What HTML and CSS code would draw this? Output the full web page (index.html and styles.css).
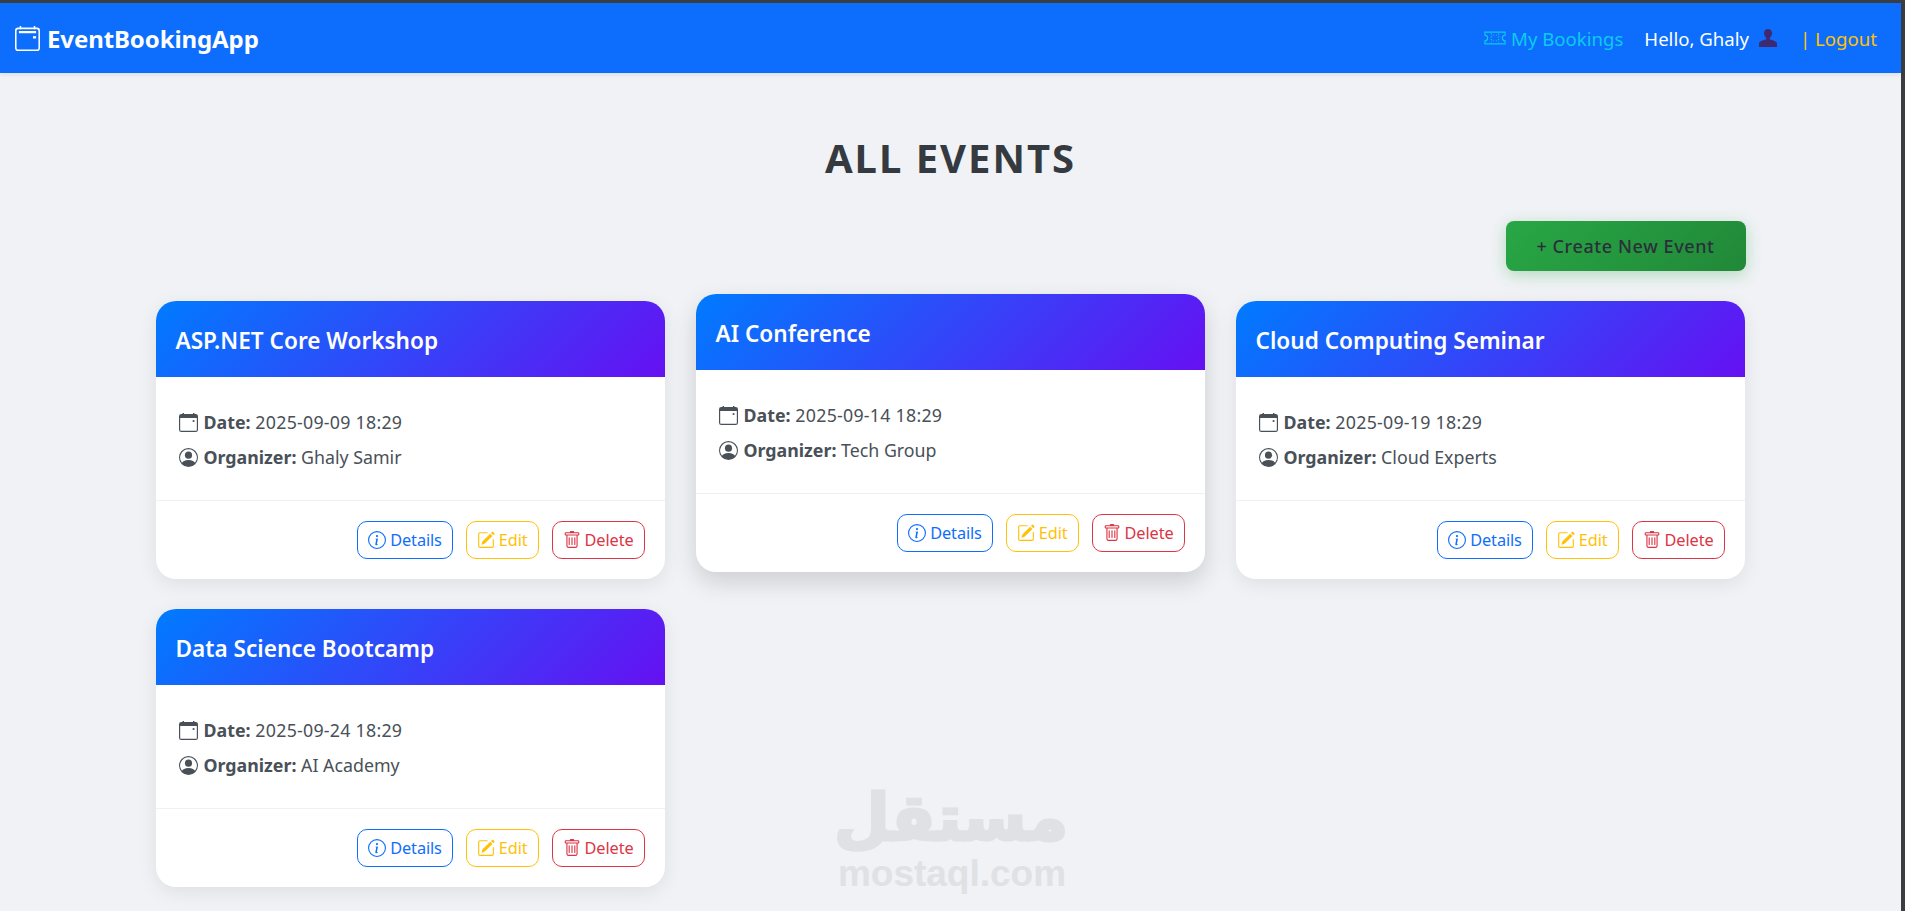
FILE: index.html
```html
<!DOCTYPE html>
<html lang="en">
  <head>
    <meta charset="UTF-8" />
    <meta name="viewport" content="width=device-width, initial-scale=1.0" />
    <title>EventBookingApp</title>
    <link rel="stylesheet" href="styles.css">
  </head>
  <body>
    <svg class="defs" aria-hidden="true">
      <symbol id="i-cal" viewBox="0 0 16 16">
        <path d="M2 .8h12A2 2 0 0 1 16 2.800v11.200a2 2 0 0 1-2 2H2a2 2 0 0 1-2-2V2.800a2 2 0 0 1 2-2zM1 4.200V14a1 1 0 0 0 1 1h12a1 1 0 0 0 1-1V4.200z"/>
        <path d="M3 0h1.200v2H3zM11.800 0H13v2h-1.200z"/>
        <rect x="11.500" y="6" width="1.500" height="1.500"/>
      </symbol>
      <symbol id="i-brand" viewBox="0 0 16 16">
        <path d="M2 1h12A2 2 0 0 1 16 3v11a2 2 0 0 1-2 2H2a2 2 0 0 1-2-2V3a2 2 0 0 1 2-2zM2 2a1 1 0 0 0-1 1v11a1 1 0 0 0 1 1h12a1 1 0 0 0 1-1V3a1 1 0 0 0-1-1z"/>
        <path d="M3 0h1v2H3zM12 0h1v2h-1zM2.500 3.200h11v1.500h-11z"/>
        <rect x="11.500" y="6.500" width="2" height="1.500"/>
      </symbol>
      <symbol id="i-user" viewBox="0 0 16 16">
        <path d="M11 6a3 3 0 1 1-6 0 3 3 0 0 1 6 0"/>
        <path fill-rule="evenodd" d="M0 8a8 8 0 1 1 16 0A8 8 0 0 1 0 8m8-7a7 7 0 0 0-5.468 11.370C3.242 11.226 4.805 10 8 10s4.757 1.225 5.468 2.370A7 7 0 0 0 8 1"/>
      </symbol>
      <symbol id="i-info" viewBox="0 0 16 16">
        <path d="M8 15A7 7 0 1 1 8 1a7 7 0 0 1 0 14m0 1A8 8 0 1 0 8 0a8 8 0 0 0 0 16"/>
        <path d="m8.930 6.588-2.290.287-.082.380.450.083c.294.070.352.176.288.469l-.738 3.468c-.194.897.105 1.319.808 1.319.545 0 1.178-.252 1.465-.598l.088-.416c-.2.176-.492.246-.686.246-.275 0-.375-.193-.304-.533zM9 4.500a1 1 0 1 1-2 0 1 1 0 0 1 2 0"/>
      </symbol>
      <symbol id="i-edit" viewBox="0 0 16 16">
        <path d="M15.502 1.940a.5.5 0 0 1 0 .706L14.459 3.690l-2-2L13.502.646a.5.5 0 0 1 .707 0l1.293 1.293zm-1.750 2.456-2-2L4.939 9.210a.5.5 0 0 0-.121.196l-.805 2.414a.25.25 0 0 0 .316.316l2.414-.805a.5.5 0 0 0 .196-.12l6.813-6.814z"/>
        <path fill-rule="evenodd" d="M1 13.500A1.500 1.500 0 0 0 2.500 15h11a1.500 1.500 0 0 0 1.500-1.500v-6a.5.5 0 0 0-1 0v6a.5.5 0 0 1-.5.5h-11a.5.5 0 0 1-.5-.5v-11a.5.5 0 0 1 .5-.5H9a.5.5 0 0 0 0-1H2.500A1.500 1.500 0 0 0 1 2.500z"/>
      </symbol>
      <symbol id="i-trash" viewBox="0 0 16 16">
        <path d="M5.500 5.500A.5.5 0 0 1 6 6v6a.5.5 0 0 1-1 0V6a.5.5 0 0 1 .5-.5m2.500 0a.5.5 0 0 1 .5.5v6a.5.5 0 0 1-1 0V6a.5.5 0 0 1 .5-.5m3 .5a.5.5 0 0 0-1 0v6a.5.5 0 0 0 1 0z"/>
        <path d="M14.500 3a1 1 0 0 1-1 1H13v9a2 2 0 0 1-2 2H5a2 2 0 0 1-2-2V4h-.5a1 1 0 0 1-1-1V2a1 1 0 0 1 1-1H6a1 1 0 0 1 1-1h2a1 1 0 0 1 1 1h3.500a1 1 0 0 1 1 1zM4.118 4 4 4.059V13a1 1 0 0 0 1 1h6a1 1 0 0 0 1-1V4.059L11.882 4zM2.500 3h11V2h-11z"/>
      </symbol>
    </svg>

    <div class="page">
      <nav class="navbar">
        <a class="brand" href="#"><svg class="brand-icon"><use href="#i-brand"/></svg>EventBookingApp</a>
        <div class="nav-links">
          <a class="nav-bookings" href="#">
            <svg class="ticket" viewBox="0 0 24 16" fill="none" stroke="currentColor" stroke-width="1.300">
              <path d="M1 1.500h22v3.500a3 3 0 0 0 0 6v3.500H1V11a3 3 0 0 0 0-6z"/>
              <path d="M8 3v10M16 3v10" stroke-dasharray="1.500 1.500"/>
              <path d="M10 5h1M13 5h1M10 11h1M13 11h1"/>
            </svg>My Bookings</a>
          <span class="nav-hello">Hello, Ghaly
            <svg class="bust" viewBox="0 0 20 20">
              <path d="M10 1c2.600 0 4 1.800 4 4.200 0 2.100-1 3.700-2.200 4.600v1.400c2.800.8 6.200 1.900 7.200 3.600V19H1v-4.200c1-1.700 4.400-2.800 7.200-3.600V9.800C7 8.900 6 7.300 6 5.200 6 2.800 7.400 1 10 1z"/>
            </svg>
          </span>
          <a class="nav-logout" href="#">| Logout</a>
        </div>
      </nav>

      <main class="content">
        <h1 class="page-title">ALL EVENTS</h1>
        <div class="actions">
          <a class="btn-create" href="#">+ Create New Event</a>
        </div>

        <div class="card-grid">
          <div class="card">
            <div class="card-head"><h2>ASP.NET Core Workshop</h2></div>
            <div class="card-body">
              <p><svg class="meta-icon"><use href="#i-cal"/></svg><b>Date:</b><span class="when"> 2025-09-09 18:29</span></p>
              <p><svg class="meta-icon"><use href="#i-user"/></svg><b>Organizer:</b> Ghaly Samir</p>
            </div>
            <div class="card-foot">
              <a class="btn btn-blue" href="#"><svg><use href="#i-info"/></svg>Details</a>
              <a class="btn btn-yellow" href="#"><svg><use href="#i-edit"/></svg>Edit</a>
              <a class="btn btn-red" href="#"><svg><use href="#i-trash"/></svg>Delete</a>
            </div>
          </div>

          <div class="card card-hover">
            <div class="card-head"><h2>AI Conference</h2></div>
            <div class="card-body">
              <p><svg class="meta-icon"><use href="#i-cal"/></svg><b>Date:</b><span class="when"> 2025-09-14 18:29</span></p>
              <p><svg class="meta-icon"><use href="#i-user"/></svg><b>Organizer:</b> Tech Group</p>
            </div>
            <div class="card-foot">
              <a class="btn btn-blue" href="#"><svg><use href="#i-info"/></svg>Details</a>
              <a class="btn btn-yellow" href="#"><svg><use href="#i-edit"/></svg>Edit</a>
              <a class="btn btn-red" href="#"><svg><use href="#i-trash"/></svg>Delete</a>
            </div>
          </div>

          <div class="card">
            <div class="card-head"><h2>Cloud Computing Seminar</h2></div>
            <div class="card-body">
              <p><svg class="meta-icon"><use href="#i-cal"/></svg><b>Date:</b><span class="when"> 2025-09-19 18:29</span></p>
              <p><svg class="meta-icon"><use href="#i-user"/></svg><b>Organizer:</b> Cloud Experts</p>
            </div>
            <div class="card-foot">
              <a class="btn btn-blue" href="#"><svg><use href="#i-info"/></svg>Details</a>
              <a class="btn btn-yellow" href="#"><svg><use href="#i-edit"/></svg>Edit</a>
              <a class="btn btn-red" href="#"><svg><use href="#i-trash"/></svg>Delete</a>
            </div>
          </div>

          <div class="card">
            <div class="card-head"><h2>Data Science Bootcamp</h2></div>
            <div class="card-body">
              <p><svg class="meta-icon"><use href="#i-cal"/></svg><b>Date:</b><span class="when"> 2025-09-24 18:29</span></p>
              <p><svg class="meta-icon"><use href="#i-user"/></svg><b>Organizer:</b> AI Academy</p>
            </div>
            <div class="card-foot">
              <a class="btn btn-blue" href="#"><svg><use href="#i-info"/></svg>Details</a>
              <a class="btn btn-yellow" href="#"><svg><use href="#i-edit"/></svg>Edit</a>
              <a class="btn btn-red" href="#"><svg><use href="#i-trash"/></svg>Delete</a>
            </div>
          </div>
        </div>
      </main>
    </div>

    <div class="watermark">
      <div class="wm-ar" lang="ar" dir="rtl">مستقل</div>
      <div class="wm-en">mostaql.com</div>
    </div>
  </body>
</html>
```

FILE: styles.css
```css
html,
body {
  margin: 0;
  height: 100%;
  overflow: hidden;
}
body {
  font-family: "Noto Sans", "Open Sans", Arial, sans-serif;
  background-color: #3a3d42;
  border-top: 3px solid #3a3d42;
  box-sizing: border-box;
}
a {
  text-decoration: none;
}
.defs {
  display: none;
}
.page {
  margin-right: 4px;
  height: 100%;
  background-color: #f0f2f5;
}

/* navbar */
.navbar {
  height: 70px;
  background-color: #0d6efd;
  display: flex;
  align-items: center;
  justify-content: space-between;
  padding: 0 24px 0 15px;
  box-shadow: 0 2px 4px rgba(0, 0, 0, 0.08);
}
.brand {
  color: white;
  font-size: 24px;
  font-weight: 700;
  letter-spacing: -0.1px;
  display: flex;
  align-items: center;
  gap: 7px;
}
.brand-icon {
  width: 25px;
  height: 25px;
  fill: white;
}
.nav-links {
  display: flex;
  align-items: center;
  font-size: 18.6px;
}
.nav-bookings {
  color: #0dcaf0;
  display: flex;
  align-items: center;
  gap: 5px;
}
.ticket {
  width: 22px;
  height: 16px;
}
.nav-hello {
  color: white;
  margin-left: 21px;
  display: flex;
  align-items: center;
  gap: 9px;
}
.bust {
  width: 20px;
  height: 20px;
  fill: #3f2a72;
}
.nav-logout {
  color: #ffc107;
  margin-left: 22px;
}

/* content */
.content {
  width: 1590px;
  margin: 0 auto;
}
.page-title {
  margin: 0;
  padding-top: 57px;
  text-align: center;
  font-size: 40px;
  line-height: 56px;
  font-weight: 700;
  letter-spacing: 2px;
  color: #343a40;
}
.actions {
  display: flex;
  justify-content: flex-end;
  margin-top: 35px;
}
.btn-create {
  width: 240px;
  height: 50px;
  box-sizing: border-box;
  display: flex;
  align-items: center;
  justify-content: center;
  border-radius: 8px;
  background: linear-gradient(135deg, #28a745, #218838);
  box-shadow: 0 4px 15px rgba(40, 167, 69, 0.3);
  color: #2b2f3a;
  font-size: 18px;
  font-weight: 500;
  letter-spacing: 0.6px;
}
.card-grid {
  display: grid;
  grid-template-columns: repeat(3, 509px);
  gap: 30px 31px;
  margin-top: 30px;
}
.card {
  background: white;
  border-radius: 20px;
  overflow: hidden;
  box-shadow: 0 5px 20px rgba(0, 0, 0, 0.08);
}
.card-hover {
  transform: translateY(-7px);
  box-shadow: 0 10px 25px rgba(0, 0, 0, 0.15);
}
.card-head {
  height: 76px;
  box-sizing: border-box;
  display: flex;
  align-items: center;
  padding: 2px 20px 0;
  background: linear-gradient(135deg, #007bff, #6610f2);
}
.card-head h2 {
  margin: 0;
  color: white;
  font-size: 22.6px;
  font-weight: 600;
}
.card-body {
  height: 124px;
  box-sizing: border-box;
  padding: 33px 23px 0;
  border-bottom: 1px solid #f0f0f0;
}
.card-body p {
  margin: 0 0 11px;
  height: 24px;
  display: flex;
  align-items: center;
  white-space: pre;
  color: #495057;
  font-size: 17.8px;
}
.when {
  letter-spacing: 0.25px;
}
.meta-icon {
  width: 19px;
  height: 19px;
  margin-right: 6px;
  fill: #495057;
}
.card-foot {
  height: 78px;
  box-sizing: border-box;
  display: flex;
  justify-content: flex-end;
  align-items: center;
  gap: 13px;
  padding: 0 20px;
}
.btn {
  height: 38px;
  box-sizing: border-box;
  display: flex;
  align-items: center;
  gap: 4px;
  padding: 0 10px;
  border: 1px solid currentColor;
  border-radius: 10px;
  font-size: 16.3px;
  letter-spacing: -0.1px;
}
.btn svg {
  width: 18px;
  height: 18px;
  fill: currentColor;
}
.btn-blue {
  color: #0d6efd;
}
.btn-yellow {
  color: #ffc107;
}
.btn-red {
  color: #dc3545;
}

/* watermark sits over the page */
.watermark {
  position: absolute;
  left: 836px;
  top: 776px;
  width: 232px;
  text-align: center;
  pointer-events: none;
}
.wm-ar {
  font-family: "DejaVu Sans", sans-serif;
  font-weight: 700;
  font-size: 64px;
  line-height: 84px;
  color: #dfe1e4;
  -webkit-text-stroke: 3px #dfe1e4;
}
.wm-en {
  font-family: "Liberation Sans", Arial, sans-serif;
  font-weight: 700;
  font-size: 37px;
  line-height: 34px;
  margin-top: -3px;
  color: #dfe1e4;
}
```
